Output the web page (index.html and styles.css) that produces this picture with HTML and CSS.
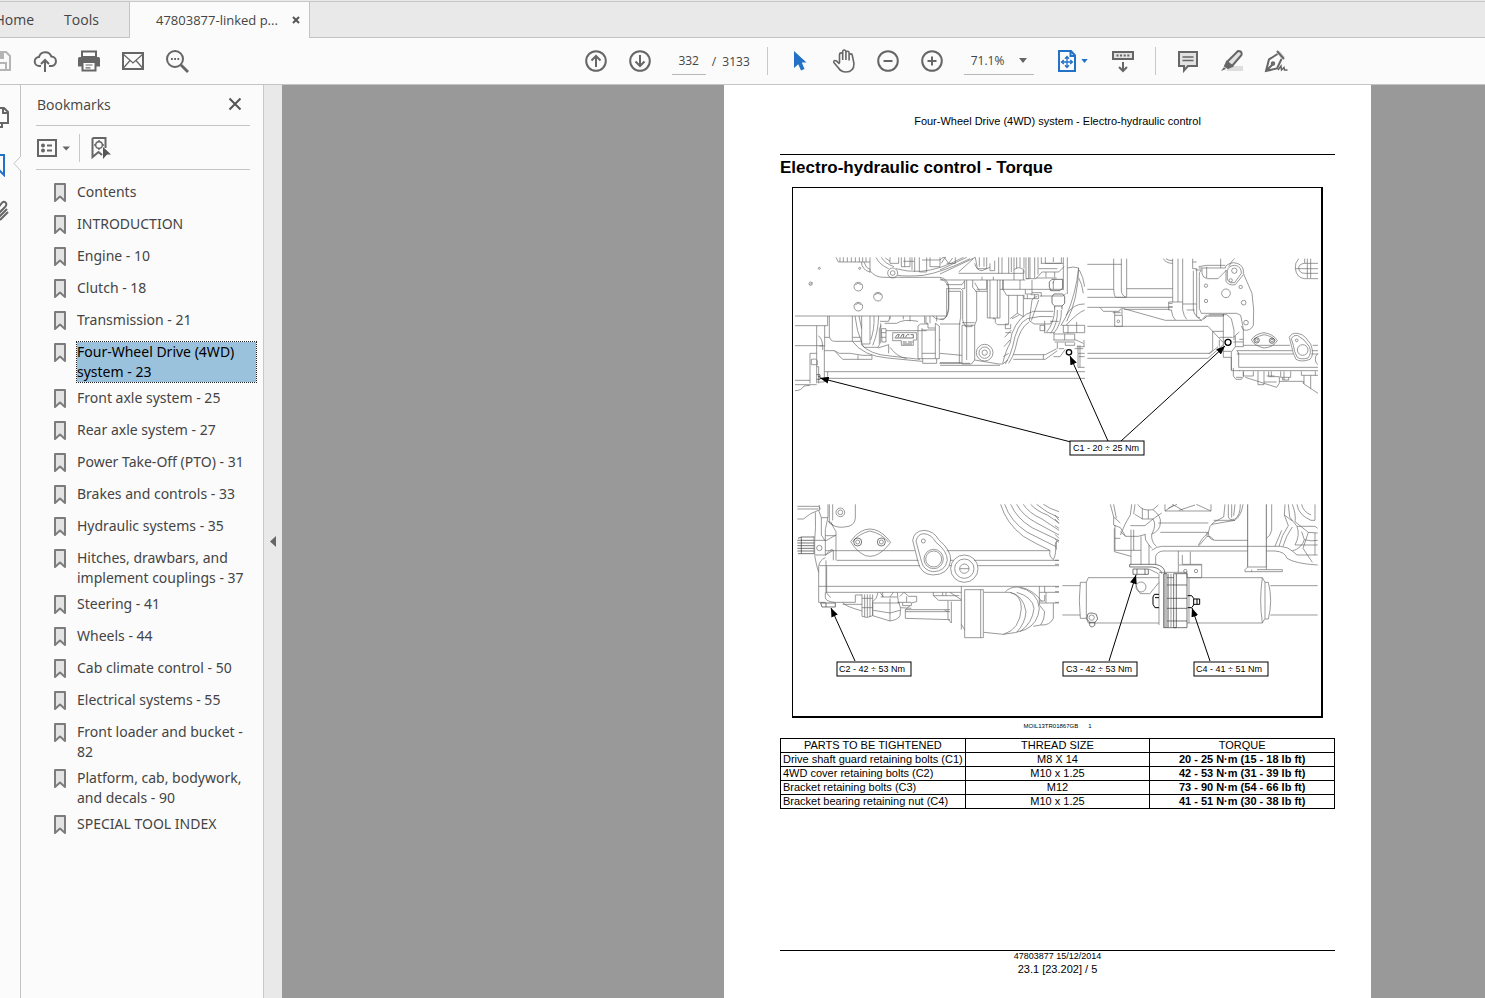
FILE: index.html
```html
<!DOCTYPE html>
<html lang="en">
<head>
<meta charset="utf-8">
<title>47803877-linked p...</title>
<link rel="stylesheet" href="styles.css">
</head>
<body>
<svg class="defs" aria-hidden="true">
  <defs>
    <symbol id="bm" viewBox="0 0 12 19"><path d="M1 1H11V18L6 13.500L1 18Z" fill="#e3e3e3" stroke="#7c7c7c" stroke-width="2" stroke-linejoin="round"/></symbol>
    <marker id="arrow" viewBox="0 0 10 8" refX="10" refY="4" markerWidth="9" markerHeight="7" markerUnits="userSpaceOnUse" orient="auto"><path d="M0 0L10 4L0 8Z" fill="#000"/></marker>
  </defs>
</svg>

<header class="tabs">
  <button class="tab tab-home">Home</button>
  <button class="tab tab-tools">Tools</button>
  <div class="tab tab-file"><span>47803877-linked p...</span>
    <button class="plain" aria-label="Close tab"><svg width="8" height="8" viewBox="0 0 8 8"><path d="M1 1L7 7M7 1L1 7" stroke="#555" stroke-width="2"/></svg></button>
  </div>
</header>

<div class="toolbar">
  <div class="group group-file">
    <button class="tool" aria-label="Save"><svg class="i faint" viewBox="0 0 24 24"><path d="M2 3H17L21 7V21H2Z M7 3V9H14V3 M6 21V14H17V21 M12 4V8"/></svg></button>
    <button class="tool" aria-label="Upload"><svg class="i" viewBox="0 0 24 24"><path d="M8 17H6.500a4.500 4.500 0 0 1-.5-9 6.500 6.500 0 0 1 12.300-.6A4.800 4.800 0 0 1 18 17H16 M12 23V11.500 M8 15L12 11L16 15"/></svg></button>
    <button class="tool" aria-label="Print"><svg class="i" viewBox="0 0 24 24"><path d="M5 2.500H19V8H5Z" fill="#fff"/><path d="M1 9.500Q1 8 2.500 8H21.500Q23 8 23 9.500V17.500H1Z" fill="#666" stroke="none"/><path d="M5.500 13H18.500V21.500H5.500Z" fill="#fff"/><path d="M8.500 16H15.500M8.500 18.800H13.500" stroke-width="1.200"/></svg></button>
    <button class="tool" aria-label="Mail"><svg class="i" viewBox="0 0 24 24"><path d="M2 4H22V20H2Z"/><path d="M2 5L12 14L22 5M2 19.500L9 11.500M22 19.500L15 11.500" stroke-width="1.300"/></svg></button>
    <button class="tool" aria-label="Search"><svg class="i" viewBox="0 0 24 24"><circle cx="10" cy="10" r="8"/><path d="M16 16L23 23" stroke-width="2.800"/><path d="M6 10h1.800M9.200 10H11M12.400 10h1.800" stroke-width="1.800"/></svg></button>
  </div>
  <div class="spacer-wide"></div>
  <div class="group">
    <button class="tool" aria-label="Previous page"><svg class="i" viewBox="0 0 24 24"><circle cx="12" cy="12" r="9.800"/><path d="M12 18V7M7.500 11.500L12 7L16.500 11.500"/></svg></button>
    <button class="tool" aria-label="Next page"><svg class="i" viewBox="0 0 24 24"><circle cx="12" cy="12" r="9.800"/><path d="M12 6V17M7.500 12.500L12 17L16.500 12.500"/></svg></button>
    <input class="page-no" aria-label="Page number" value="332">
    <span class="page-total">/ &nbsp;3133</span>
    <i class="sep"></i>
    <button class="tool" aria-label="Select"><svg class="i" viewBox="0 0 24 24"><path d="M6 2L18.500 13.500H13.800L16.500 20L13 21.500L10.300 15.200L6 19Z" fill="#2372c5" stroke="none"/></svg></button>
    <button class="tool" aria-label="Pan"><svg class="i" viewBox="0 0 24 24"><path class="thin" d="M7.500 14V5.500a1.600 1.600 0 0 1 3.200 0V11 M10.700 5V2.600a1.600 1.600 0 0 1 3.200 0V11 M13.900 3.800a1.600 1.600 0 0 1 3.200 0V11.500 M17.100 6.500a1.600 1.600 0 0 1 3.200 0L22 14.500Q22 23 14 23Q9 23 6.500 19L1.800 13.500Q1.500 10.500 4.500 12L7.500 15"/></svg></button>
    <button class="tool" aria-label="Zoom out"><svg class="i" viewBox="0 0 24 24"><circle cx="12" cy="12" r="9.800"/><path d="M7.500 12H16.500"/></svg></button>
    <button class="tool" aria-label="Zoom in"><svg class="i" viewBox="0 0 24 24"><circle cx="12" cy="12" r="9.800"/><path d="M7.500 12H16.500M12 7.500V16.500"/></svg></button>
    <label class="zoom"><select aria-label="Zoom level"><option>71.1%</option></select><svg width="8" height="5" viewBox="0 0 8 5"><path d="M0 0H8L4 5Z" fill="#666"/></svg></label>
    <button class="tool fit" aria-label="Fit page"><svg class="i blue" viewBox="0 0 24 24"><path d="M4 2H16L20 6.500V22H4Z M15.500 2V7H20"/><path d="M12 8V18M7 13H17M10 9.800L12 7.500L14 9.800M10 16.200L12 18.500L14 16.200M8.800 11L6.500 13L8.800 15M15.200 11L17.500 13L15.200 15" stroke-width="1.300"/></svg><svg width="7" height="4" viewBox="0 0 8 5"><path d="M0 0H8L4 5Z" fill="#2372c5"/></svg></button>
    <button class="tool" aria-label="Scrolling"><svg class="i" viewBox="0 0 24 24"><path d="M2 3H22V10H2Z" fill="#e2e2e2"/><path d="M5.500 6.500h2M9 6.500h2M12.700 6.500h2M16.300 6.500h2M12 13V22M8 18L12 22L16 18"/></svg></button>
    <i class="sep sep-tight"></i>
    <button class="tool" aria-label="Comment"><svg class="i" viewBox="0 0 24 24"><path d="M3 3H21V17H12L8 21.500V17H3Z" fill="#e2e2e2"/><path d="M6.500 8H17.500M6.500 11.500H17.500" stroke-width="1.300"/></svg></button>
    <button class="tool" aria-label="Highlight"><svg class="i" viewBox="0 0 24 24"><path d="M11 17H23V22H6Z" fill="#ddd" stroke="none"/><path d="M18 2Q22.500 2 21.500 6L12 17L7 13Z" fill="#e2e2e2"/><path d="M7 13L12 17L8 19L5 17Z" fill="#666"/><path d="M4 18L6 20L1 22Z" fill="#666" stroke="none"/></svg></button>
    <button class="tool" aria-label="Sign"><svg class="i" viewBox="0 0 24 24"><path d="M13 4L16 2L21 8L18 11Z" fill="#ddd" stroke="none"/><path d="M13 2L20 10M13.500 5L5 10.500L2 22L13 19.500L17.500 10M2 22L9 15"/><circle cx="9" cy="14.500" r="1.200"/><path d="M14 21L17 17L17.500 21L20 18.500L20.500 21H23.500" stroke-width="1.500"/></svg></button>
  </div>
  <div class="spacer"></div>
</div>

<main class="main">
  <nav class="rail" aria-label="Panels">
    <button class="plain" aria-label="Pages"><svg width="22" height="24" viewBox="0 0 22 24" class="i"><path d="M9 2H16L20 6V17H9Z M15 2V7H20 M9 7H3V21H14V17"/></svg></button>
    <button class="plain" aria-label="Bookmarks panel"><svg width="22" height="24" viewBox="0 0 22 24" class="i blue"><path d="M4 2H16V22L10 16L4 22Z"/></svg></button>
    <button class="plain" aria-label="Attachments"><svg width="22" height="24" viewBox="0 0 22 24" class="i"><path d="M19 9L10 18Q7 20 5 17Q4 15 6 13L13 4Q16 0 18 3Q19 5 17 7L10 14M20 12L12 20"/></svg></button>
    <svg class="notch" width="8" height="15" viewBox="0 0 8 15"><path d="M8 0L1 7.500L8 15" fill="#fbfbfb" stroke="#c4c4c4"/></svg>
  </nav>
  <aside class="panel">
    <div class="panel-head"><h2>Bookmarks</h2><button class="plain" aria-label="Close panel"><svg width="14" height="14" viewBox="0 0 14 14"><path d="M1.500 1.500L12.500 12.500M12.500 1.500L1.500 12.500" stroke="#555" stroke-width="2"/></svg></button></div>
    <div class="panel-tools">
      <button class="plain" aria-label="Options"><svg width="34" height="24" viewBox="0 0 34 24" class="i"><path d="M2 4H20V20H2Z"/><path d="M11 9.500H16M11 14.500H16"/><circle cx="7" cy="9.500" r="1" /><circle cx="7" cy="14.500" r="1"/><path d="M26.500 10.500H34L30.200 14.500Z" fill="#666" stroke="none"/></svg></button>
      <i class="sep-small"></i>
      <button class="plain" aria-label="Find bookmark"><svg width="22" height="24" viewBox="0 0 22 24" class="i"><path d="M2.500 2H15.500V12M2.500 2V21L8.500 16L12 19"/><circle cx="9" cy="9" r="3.300" stroke-width="1.400"/><path d="M9 4V6M9 12V14M4 9H6M12 9H14" stroke-width="1.400"/><path d="M13 11L21 18.500H17L13 23Z" fill="#555" stroke="none"/></svg></button>
    </div>
    <ul class="marks">
      <li><svg><use href="#bm"/></svg><a href="#">Contents</a></li>
      <li><svg><use href="#bm"/></svg><a href="#">INTRODUCTION</a></li>
      <li><svg><use href="#bm"/></svg><a href="#">Engine - 10</a></li>
      <li><svg><use href="#bm"/></svg><a href="#">Clutch - 18</a></li>
      <li><svg><use href="#bm"/></svg><a href="#">Transmission - 21</a></li>
      <li class="current"><svg><use href="#bm"/></svg><a href="#">Four-Wheel Drive (4WD) system - 23</a></li>
      <li><svg><use href="#bm"/></svg><a href="#">Front axle system - 25</a></li>
      <li><svg><use href="#bm"/></svg><a href="#">Rear axle system - 27</a></li>
      <li><svg><use href="#bm"/></svg><a href="#">Power Take-Off (PTO) - 31</a></li>
      <li><svg><use href="#bm"/></svg><a href="#">Brakes and controls - 33</a></li>
      <li><svg><use href="#bm"/></svg><a href="#">Hydraulic systems - 35</a></li>
      <li><svg><use href="#bm"/></svg><a href="#">Hitches, drawbars, and implement couplings - 37</a></li>
      <li><svg><use href="#bm"/></svg><a href="#">Steering - 41</a></li>
      <li><svg><use href="#bm"/></svg><a href="#">Wheels - 44</a></li>
      <li><svg><use href="#bm"/></svg><a href="#">Cab climate control - 50</a></li>
      <li><svg><use href="#bm"/></svg><a href="#">Electrical systems - 55</a></li>
      <li><svg><use href="#bm"/></svg><a href="#">Front loader and bucket - 82</a></li>
      <li><svg><use href="#bm"/></svg><a href="#">Platform, cab, bodywork, and decals - 90</a></li>
      <li><svg><use href="#bm"/></svg><a href="#">SPECIAL TOOL INDEX</a></li>
    </ul>
  </aside>
  <button class="collapse" aria-label="Collapse panel"><svg width="6" height="11" viewBox="0 0 6 11"><path d="M6 0V11L0 5.500Z" fill="#666"/></svg></button>

  <section class="viewer">
    <article class="sheet">
      <p class="running">Four-Wheel Drive (4WD) system - Electro-hydraulic control</p>
      <h1>Electro-hydraulic control - Torque</h1>
      <figure>
        <svg class="drawing" viewBox="793 188 528 528" role="img" aria-label="Torque points C1 to C4">
          <!-- upper left view: gearbox side -->
          <g class="ln" transform="translate(790 250) scale(.33333)">
            <path d="M138 22L145 36H240M150 22V36M160 22V36M172 22V36M184 22V36M196 22V36M208 22V36M218 22V36M228 22V36M214 36Q216 60 240 66M222 36Q226 54 242 60M240 22V68"/>
            <path d="M240 62Q255 82 280 82H450Q474 86 476 110V180Q472 208 452 208Q434 208 428 198"/>
            <path d="M258 22Q268 44 296 56M274 22Q284 40 312 50M318 56Q350 66 392 64Q450 60 520 22M322 76Q352 80 400 76Q460 66 540 26"/>
            <circle cx="308" cy="69" r="15"/><circle cx="308" cy="69" r="7"/>
            <path d="M300 22V40H326V22M334 22V50H360V22M344 22V50M366 22V60M374 22V66M388 22V66H410V22M396 30H450M420 22V50H450V22M340 34H372M300 34L286 24"/>
            <circle cx="88" cy="55" r="3"/><circle cx="209" cy="55" r="3"/><circle cx="62" cy="101" r="5"/><path d="M58 104L67 98"/>
            <circle cx="205" cy="110" r="13"/><circle cx="264" cy="140" r="13"/><circle cx="205" cy="170" r="13"/>
            <path d="M196 104Q204 96 214 104M196 164Q204 156 214 164M254 134Q264 126 274 134"/>
            <path d="M15 198H470M15 227H113V198M80 227V400M104 227V290M85 258Q96 262 98 288V300M88 288H98M118 198V258Q120 274 134 274H187V198M104 262H118"/>
            <path d="M195 198Q200 244 216 280M207 198Q210 214 215 236M215 198V282H240V198M266 198Q264 250 248 286M252 198Q254 238 242 270M216 282L222 292H264L268 284V236L274 226M188 274H216M188 262H212"/>
            <path d="M15 287H103V396H82M60 400V310H80M64 344V328Q78 324 82 332V344ZM15 391H60M15 404H80M15 422Q34 422 42 408L60 406"/>
            <path d="M80 350H86V400M103 302H133L158 328H246V316H218L180 310H148L133 302M204 316V328"/>
            <path d="M187 274Q220 318 292 324L396 334M212 282Q240 314 300 318L390 328M264 294L296 284M296 284V310M300 292Q320 320 350 326"/>
            <path d="M270 214H296L300 200M272 220V280M274 236H288V276H276ZM274 248H288M274 262H288M284 220H320Q340 206 384 214M288 242H410M300 198V208M340 198V208M360 198V214"/>
            <path d="M308 248H380V270H370V286H334V272H308Z"/>
            <path class="dk" d="M316 262L322 254H328L324 262M332 262L336 254H342L340 262M346 262L352 254H358M362 254H370V264H314M338 276H350M354 276H368M338 282H366"/>
            <path class="dk" d="M80 374H90V388H80M84 380H90"/>
            <path d="M384 228V326H398V340H440V326H448V228L436 220V234H414V220H408V200M384 228L392 222H414M396 234V326M436 234V326M398 326H440M404 198V220M420 198V220M440 214V198M396 310H436M396 240H436"/>
            <path d="M470 118V200M448 270H452M448 340H540M104 365H885M113 385H885M113 365V380"/>
          </g>
          <!-- upper middle view: axle joint -->
          <g class="ln" transform="translate(940 250) scale(.33333)">
            <path d="M0 60L80 22M0 72L106 22M0 30Q8 20 18 22M4 40L14 24L26 40L38 24M20 40H46V22M56 66L100 26M56 70H250M0 90H256M18 104H66L74 92M106 22L112 56H140V22M118 22V50M132 22V50M150 40V62H164V32M104 40Q110 62 126 62L150 52M176 22V70M186 22V70M206 22V70M222 22V60Q234 46 252 60V70M214 22V66M230 22V56M240 22V52M252 22V56M222 60V90M250 60V90M258 22V86H266V22M284 22V84M294 22V74M270 22V86M304 22V42M316 22V40H364V22M340 22V36M370 22V120M382 22V132M258 86H288L306 66H356L372 50M304 40H370M296 56H352M318 66V82M344 66V82M288 84H350"/>
            <path d="M0 86Q24 94 26 116V170Q24 196 12 208H0M18 116H62L68 122V210L74 226H66V342H94L104 330V226H74M26 124H62V200L58 226V340M74 92V116H66M80 90V330M98 90V112L110 126V210L104 226M106 124H142M110 118H140V90M104 98L118 122M142 90V204H180V90M150 90V204M172 90V204M158 206H166V218L172 224H206M126 90V80M160 90V80M188 90V120M104 330L176 342H188L204 330M0 222H62M66 218H104M76 224V230H96V224"/>
            <circle cx="134" cy="308" r="25"/><circle cx="134" cy="308" r="17"/><circle cx="134" cy="308" r="8"/>
            <path d="M0 310L66 316M0 338H66M0 346H180M180 118H370M190 90V120L200 136H250V200L232 190V136M206 136V222H196V236H212V222M210 206L232 190M216 206L236 196M240 90V118M256 118V132H276V90M252 134V146H296V134H272M262 134V146M284 134V146M300 138H370L378 130M276 150L268 212L282 222H330L338 212M296 150L274 212M276 150Q282 138 292 140M304 140V128H276"/>
            <path class="dk" d="M336 88H368V114L360 122H332L328 110V96Z"/><path d="M340 94V118M344 88L338 100"/>
            <path d="M188 340Q198 300 210 280L216 250Q236 196 280 184H340M196 342Q210 320 218 290Q230 220 262 206Q300 196 338 200M206 340Q220 320 226 296Q238 232 268 216M194 262L214 240M192 290L210 270M190 320L206 310M196 248H214"/>
            <path class="dk" d="M336 140L342 132H368L374 140V160L366 168H344L336 160ZM344 168V178M366 168V178"/>
            <path d="M344 178Q342 220 320 246M352 180Q354 220 332 250M364 180Q366 220 340 252M382 54Q400 48 416 54Q408 130 378 200L362 228M416 54Q414 150 380 214M418 60Q430 80 434 110M416 84Q426 100 430 130M434 162Q400 160 378 196M434 180Q410 190 378 226M300 226H314V242H300ZM314 212V250M316 248H344M330 214H356M366 226H434V248H370V226M384 226V250M410 216V248"/>
            <path d="M340 270H408L430 280M342 270V252H404V270M374 252V270M344 276H404M352 278V296M376 278V286H404V278M356 296H372M220 314H316L350 296M220 328H316L352 302M310 314V328M340 320H360L376 298M414 286V352M420 286V352M432 270V290M410 290H434M414 352H434M404 296H430M414 310H434M416 320H434"/>
            <circle class="bk" cx="387" cy="307" r="8"/>
          </g>
          <!-- upper right view: front axle -->
          <g class="ln" transform="translate(1080 250) scale(.33333)">
            <path d="M22 43H125M101 26V115Q102 140 108 142H138Q124 136 124 120V26M140 26V142M22 118H102M140 116H278M22 142H278M22 172H278M60 172L70 184H118L122 176M104 184V196H126V176M98 188H122M104 196V229H127V196"/>
            <circle cx="115" cy="214" r="4"/>
            <path d="M124 174L256 211H366M132 178H268M278 26V156H266V180H274Q276 200 286 210M266 160H278M266 170H278M294 26V156M308 26V180Q312 200 320 208M250 26Q258 40 278 40M258 26Q264 32 278 32M278 156H308M308 162H350M320 180H344M338 26V56H350V200L364 211L380 194M338 36H350M340 62V180Q344 200 360 204M346 60H364Q356 66 358 80V176L364 190H470L482 196L490 236V276H460"/>
            <path d="M356 54H436M356 50L380 46H436M366 54V70Q368 84 382 86H414L440 60M380 50V84M422 26V54M436 54Q436 42 460 38Q486 40 490 60V70L516 130Q524 180 520 226Q512 244 490 240L484 228M446 50Q456 30 464 26M438 60V94Q446 108 466 104L490 74M442 62V90Q450 102 464 98L484 70Q484 48 464 46Q446 46 442 62"/>
            <circle cx="463" cy="62" r="8"/><circle cx="452" cy="91" r="5"/><circle cx="378" cy="107" r="5"/><circle cx="482" cy="111" r="5"/><circle cx="438" cy="130" r="13"/><circle cx="378" cy="153" r="5"/><circle cx="491" cy="158" r="7"/><circle cx="498" cy="218" r="7"/>
            <path class="dk" d="M370 208L382 198H430V192"/><path d="M430 192V322H454M386 194H440L454 206L462 240V270M22 229H384L430 278M398 244V300L386 312M398 244H430M22 310H390L414 290M22 325H384L430 284M418 262H458M430 304H454M418 270V290"/>
            <circle class="bk" cx="444" cy="277" r="9"/>
            <path d="M454 322V362H480M460 262L478 246M466 258V290L454 306V360M490 276V290H466M478 268H490M514 270Q524 252 552 248Q580 252 592 272Q580 292 552 294Q524 288 514 270ZM520 270Q530 258 552 254Q576 258 586 272"/>
            <circle class="dk" cx="530" cy="271" r="8"/><circle class="dk" cx="576" cy="272" r="8"/><circle cx="530" cy="271" r="4"/><circle cx="576" cy="272" r="4"/>
            <path d="M628 262Q634 248 652 250Q668 252 676 262L692 282Q704 314 690 328Q664 338 648 328Q638 310 634 286ZM634 266Q640 254 652 256L672 270L688 290Q696 310 684 324Q664 330 652 322Q642 306 640 286Z"/><circle cx="668" cy="300" r="16"/><circle cx="650" cy="271" r="4"/>
            <path d="M490 286H630M470 302H636M476 308V352H714M470 302Q474 304 476 312M698 286H714M696 302H714M478 362H714M470 312H640M694 312H714M714 310Q704 318 706 330Q708 342 714 344"/>
            <path d="M460 354V378L468 388H484L490 380V364M468 382H486M490 364V378H520V364M496 382L590 412L598 400V380H566V364M534 364V404H552V364M552 396H590M560 378H584M574 364V380M602 364V382H632V364M608 382V390H626V382M612 390V364M598 394H670V402M664 364V376H714M672 376V402L714 430M692 376V416M706 364V376"/>
            <path d="M714 40H674Q656 42 656 54Q658 70 674 70H714M656 26Q644 38 646 56Q650 84 674 86H714M674 26V40M682 26V84M692 26V84M646 56H714"/>
          </g>
          <!-- lower left view: cover -->
          <g class="ln" transform="translate(790 495) scale(.33333)">
            <path d="M22 34H86Q92 36 90 44L62 56L40 72H22M22 42H84M76 52Q78 100 74 136M86 46L94 68H114M94 68V120M88 44V30M114 28V66L106 104V136M118 28V84Q136 100 164 96Q194 94 196 70V28M128 28V76M122 80Q130 98 138 110V196M106 122H138M94 120L106 138L138 120M114 78L130 90M74 182Q80 216 86 232M106 182Q122 160 128 164"/>
            <circle cx="151" cy="52" r="13"/><circle cx="151" cy="52" r="7"/>
            <path class="dk" d="M24 130L34 126H72M22 136H72M22 144H72M22 152H72M22 160H72M22 168H72M24 176H72M34 126V176"/><path d="M74 136V180H106V136ZM72 124V176"/><circle cx="88" cy="159" r="8"/>
            <path d="M182 140Q200 112 226 104Q240 100 254 104Q280 112 302 142Q280 172 254 182Q240 186 226 182Q200 170 182 140ZM188 140Q206 116 240 108Q276 116 296 142"/>
            <circle class="dk" cx="203" cy="141" r="12"/><circle cx="203" cy="141" r="6"/><circle class="dk" cx="274" cy="141" r="12"/><circle cx="274" cy="141" r="6"/>
            <path d="M368 136Q372 108 402 106Q432 108 446 134Q484 166 482 196Q476 240 428 240Q392 238 384 200ZM378 138Q384 116 402 116Q424 118 438 142Q472 168 472 196Q466 230 428 230Q400 226 394 198Z"/>
            <circle cx="400" cy="138" r="6"/><circle cx="431" cy="192" r="29"/><circle cx="431" cy="192" r="24"/>
            <circle class="fill" cx="523" cy="221" r="41"/><circle cx="523" cy="221" r="29"/><circle cx="523" cy="221" r="14"/><path d="M509 221H537"/>
            <path d="M106 167H374M470 167H780M140 196H386M480 196H490M552 196H807M88 212H390M478 212H484M564 212H807M86 274H807M108 292H514M748 292H807M86 322V214Q88 196 106 188M108 196V292L122 308M106 292V308Q108 320 134 322H196V300M86 322H106M106 180L130 166V196M110 214V292"/>
            <path class="dk" d="M92 324H136V336H96ZM108 324V336"/>
            <path d="M632 28Q648 84 700 124Q740 148 780 166Q776 184 790 194Q800 176 796 148Q796 138 807 136M644 28Q662 80 712 112L796 154M662 28Q680 70 726 98L806 136M680 28Q698 62 740 84L807 120M700 28Q716 54 756 72L807 106M722 28Q740 48 772 60L807 84M740 28Q770 54 807 68M760 28Q780 42 807 50"/>
            <path d="M158 322Q160 332 216 348M196 300H216M216 298V364Q230 372 248 362V298M224 298V366M232 298V366M240 298V366M216 310H248M216 338H248M158 328H216M264 292Q262 312 248 320V362L300 378Q320 376 330 364L332 340Q322 318 322 292M300 310V378M272 306H322M250 324H330M250 346L300 354L330 346M270 292L280 306M310 292L300 306M278 292V306"/>
            <path d="M322 322H364M330 304L342 292L356 304H380V320L364 324V332H338V322M350 304V322M332 338L364 340M346 344H480M346 350H480M346 370L480 374M360 332L346 344V370M430 292V302L446 316H514M430 302H508M458 292V302M468 302V292M474 318V372L484 384V320M474 350L464 346M480 292L514 314"/>
            <path d="M514 274V404M524 284H580V428H524ZM572 284V428M514 388L524 404M582 292H660Q694 300 694 340Q690 404 640 418L582 412M646 290Q660 276 682 276Q744 288 748 340Q744 386 706 404Q680 414 640 418M660 292Q700 300 708 350Q706 384 680 412M680 292Q728 306 732 340Q728 384 690 410M748 274V330L764 350Q764 374 752 390L730 394M690 276Q730 284 756 320M764 274V292M764 300V318H748M748 324H807M790 324V370Q780 392 752 390M768 292V324"/>
          </g>
          <!-- lower right view: shaft bracket -->
          <g class="ln" transform="translate(1055 495) scale(.33333)">
            <path d="M0 60L12 76M0 72L12 86M0 92L12 100M0 118L12 130M0 132L12 142M4 140V164M0 196H12M0 208H12M0 276H12M0 290H12M0 322H12"/>
            <path d="M166 28L176 66L196 84M176 28L184 70M176 66V90L196 98L212 124H250L272 118M230 28L226 60L212 84L196 120M240 28L236 58M248 28Q262 50 294 44L310 30M240 58L262 72H294L320 54M262 40V72M280 44V72M226 92H270L294 72M294 44Q320 64 316 84Q316 106 290 118M294 72Q306 90 290 118M310 84H460M316 112H460M270 118Q268 136 282 150L290 160M290 118Q288 140 304 154M180 90V166H228M178 100V170L228 184M228 104V208M236 104V166M258 124V208M282 150V208M212 124L196 110M228 166H258M180 130H196"/>
            <path d="M330 28V48H468V28M330 48L356 30M352 28L384 46M372 46L420 30M424 28L468 48M340 40L366 28M510 28L506 66L476 82Q462 92 460 112Q460 134 480 136H578M520 28V66Q524 78 540 72Q556 62 556 28M530 28V68M540 28L536 62M564 28Q560 60 540 76H476M460 112Q440 130 430 150M476 134Q464 120 456 124L430 154M456 124V112M540 76L470 88"/>
            <path class="dk" d="M578 28V216M634 28V216"/><path d="M578 216L570 224V230H682V224H606M578 216H634V224M590 230V224M650 28V106Q646 124 634 130M290 166Q306 154 320 154H676Q700 156 712 168L726 180H788M302 208V184Q306 170 324 168H578M634 168H660Q690 170 696 190Q720 206 788 210M672 154Q680 120 700 92L688 60L690 28M684 154Q694 120 712 96M700 28L704 66L726 94Q736 120 720 150M712 28Q724 60 720 80L760 112L788 114M726 28Q730 60 768 76H780V28M740 28Q744 50 768 60M712 168Q740 160 748 134L740 110M748 134Q768 140 788 136M760 112L744 160L772 202M780 114V180M726 94H780L788 100M688 60L712 78M660 154L680 106M720 150H788"/>
            <path class="dk" d="M224 208H300Q330 212 330 236V398M224 208V216H292Q318 220 320 236M234 222H280V238H234ZM246 222V238M270 222V238"/>
            <path d="M22 272H76M22 360H76M76 262H94V370H76Q70 316 76 262ZM94 262L100 248H312M94 370L100 384H312M312 236V390M282 222L310 236M286 294L312 262M240 262Q246 284 256 296H286M312 232H396V248H440V208H406V170M370 168V232M382 180V208H406M372 210H440"/>
            <circle cx="258" cy="276" r="15"/><circle cx="391" cy="228" r="5"/><circle cx="423" cy="228" r="5"/>
            <path class="dk" d="M326 236H336V398H326ZM356 236H364V398H356ZM364 236H396V398H364M336 248H356M336 270H396M336 310H396M336 340H396M336 378H396M336 398H364"/>
            <path d="M402 250V384M396 248H622L630 262V370L622 384H396M622 248Q612 316 622 384M630 262H640Q654 316 640 372H630M646 272H788M646 360H788M340 236V398M348 236V398"/>
            <path class="bk thin" d="M312 298H298L294 306V328L300 338H312M398 302H410L416 310V330L410 338H398M416 312H434V328H416M426 312V328M300 308H312"/>
            <path class="dk" d="M98 358Q106 350 124 358L128 372L120 382H104L96 372ZM104 382Q102 396 112 396Q122 394 120 382"/><circle cx="110" cy="368" r="8"/>
          </g>
          <g class="lead">
            <path d="M1071 442L820 378"/><path d="M1108 441L1070 356"/><path d="M1121 441L1225 346"/>
            <path d="M855 661L831 608"/><path d="M1109 661L1136 575"/><path d="M1210 661L1192 608"/>
          </g>
          <g class="tag">
            <rect x="1070" y="441" width="74" height="14"/><rect x="837" y="662" width="74" height="14"/><rect x="1063" y="662" width="74" height="14"/><rect x="1194" y="662" width="74" height="14"/>
            <text x="1073" y="451">C1 - 20 ÷ 25 Nm</text><text x="839" y="672">C2 - 42 ÷ 53 Nm</text><text x="1066" y="672">C3 - 42 ÷ 53 Nm</text><text x="1196" y="672">C4 - 41 ÷ 51 Nm</text>
          </g>
        </svg>
        <figcaption><span>MOIL13TR01867GB</span><span>1</span></figcaption>
      </figure>
      <table>
        <thead><tr><th>PARTS TO BE TIGHTENED</th><th>THREAD SIZE</th><th>TORQUE</th></tr></thead>
        <tbody>
          <tr><td>Drive shaft guard retaining bolts (C1)</td><td>M8 X 14</td><td>20 - 25 N·m (15 - 18 lb ft)</td></tr>
          <tr><td>4WD cover retaining bolts (C2)</td><td>M10 x 1.25</td><td>42 - 53 N·m (31 - 39 lb ft)</td></tr>
          <tr><td>Bracket retaining bolts (C3)</td><td>M12</td><td>73 - 90 N·m (54 - 66 lb ft)</td></tr>
          <tr><td>Bracket bearing retaining nut (C4)</td><td>M10 x 1.25</td><td>41 - 51 N·m (30 - 38 lb ft)</td></tr>
        </tbody>
      </table>
      <footer><small>47803877 15/12/2014</small><span>23.1 [23.202] / 5</span></footer>
    </article>
  </section>
</main>
</body>
</html>
```
FILE: styles.css
```css
* { box-sizing: border-box; }
body {
  margin: 0;
  height: 100vh;
  display: flex;
  flex-direction: column;
  overflow: hidden;
  background: #fbfbfb;
  color: #444;
  font-family: "Open Sans", "Noto Sans", sans-serif;
  font-size: 14px;
}
.defs { position: absolute; width: 0; height: 0; }
button { font: inherit; color: inherit; border: 0; background: none; padding: 0; }
.plain { display: flex; }

.tabs {
  flex: none;
  display: flex;
  height: 38px;
  padding-top: 1px;
  background: linear-gradient(#c8c8c8, #c8c8c8) 0 1px / 100% 1px no-repeat, #e9e9e9;
  border-bottom: 1px solid #c4c4c4;
}
.tab { display: flex; align-items: center; }
.tab-home { margin-left: -8px; width: 42px; justify-content: flex-end; }
.tab-tools { width: 95px; justify-content: center; }
.tab-file {
  width: 181px;
  height: 37px;
  margin-top: 1px;
  padding: 0 9px 2px 26px;
  justify-content: space-between;
  background: #fbfbfb;
  border: 1px solid #c4c4c4;
  border-width: 0 1px;
  font-size: 13px;
}

.toolbar {
  flex: none;
  display: flex;
  align-items: center;
  height: 47px;
  border-bottom: 1px solid #c4c4c4;
  background: #fbfbfb;
}
.group { display: flex; align-items: center; flex: none; }
.group-file { margin-left: -21px; }
.spacer-wide { flex: 2; }
.spacer { flex: 1; }
.tool { display: flex; align-items: center; justify-content: center; width: 44px; height: 44px; }
.i { fill: none; stroke: #666; stroke-width: 2; }
.tool .i { width: 24px; height: 24px; }
.i .thin { stroke-width: 1.600; }
.i.faint { stroke: #b5b5b5; }
.i.blue { stroke: #2372c5; }
.page-no, .zoom select { font: inherit; font-size: 12px; color: #444; background: none; border: 0; outline: 0; }
.page-no { width: 34px; height: 28px; margin-left: 10px; padding: 0; text-align: center; border-bottom: 1px solid #b8b8b8; }
.page-total { width: 61px; padding-left: 6px; font-size: 12px; white-space: nowrap; }
.sep { width: 1px; height: 28px; background: #c8c8c8; margin-right: 10px; }
.sep-tight { margin-left: 10px; }
.zoom { display: flex; align-items: center; width: 70px; height: 28px; margin: 0 21px 0 10px; padding-right: 7px; border-bottom: 1px solid #b8b8b8; }
.zoom select { appearance: none; flex: 1; width: 50px; padding: 0 0 0 7px; }
.fit { width: 33px; height: 44px; gap: 2px; margin-right: 13px; }

.main { flex: 1; min-height: 0; display: flex; }
.rail {
  flex: none;
  position: relative;
  width: 21px;
  padding-top: 21px;
  display: flex;
  flex-direction: column;
  align-items: flex-end;
  gap: 23px;
  border-right: 1px solid #c4c4c4;
}
.rail .plain { margin-right: 10px; }
.notch { position: absolute; right: -1px; top: 71px; }
.panel { flex: none; width: 243px; padding: 0 6px 0 15px; border-right: 1px solid #c8c8c8; }
.panel-head { display: flex; align-items: center; justify-content: space-between; height: 41px; margin-right: 7px; padding: 0 8px 2px 1px; border-bottom: 1px solid #c4c4c4; }
.panel-head h2 { margin: 0; font-size: 14px; font-weight: 400; }
.panel-tools { display: flex; align-items: center; height: 44px; margin-right: 7px; border-bottom: 1px solid #c4c4c4; }
.sep-small { width: 1px; height: 28px; margin: 0 10px 0 9px; background: #c8c8c8; }
.marks { list-style: none; margin: 0; padding: 9px 0 0 17px; font-family: "Noto Sans", "Open Sans", sans-serif; }
.marks li { display: flex; gap: 10px; min-height: 32px; padding: 3px 0; line-height: 20px; }
.marks svg { flex: none; width: 14px; height: 19px; margin-top: 1px; }
.marks a { color: #444; text-decoration: none; align-self: flex-start; margin-right: -2px; }
.marks .current a { flex: 1; margin-right: 1px; color: #000; background: #9bc2dc; outline: 1px dotted #222; }
.collapse { flex: none; width: 18px; display: flex; align-items: center; justify-content: center; background: #e9e9e9; }

.viewer {
  flex: 1;
  display: grid;
  grid-template-columns: 442fr 647fr 114fr;
  background: #999;
  overflow: hidden;
}
.sheet {
  grid-column: 2;
  display: flex;
  flex-direction: column;
  padding: 0 36px 22px 56px;
  background: #fff;
  color: #000;
  font-family: "Liberation Sans", Arial, sans-serif;
  font-size: 11px;
}
.running { margin: 0; height: 70px; padding-top: 30px; line-height: 13px; text-align: center; border-bottom: 1px solid #000; }
h1 { margin: 0; height: 32px; font-size: 17px; line-height: 26px; }
figure { margin: 0 12px; }
.drawing { display: block; width: 100%; border: 1px solid #000; border-width: 1px 2px 2px 1px; }
figcaption { display: flex; justify-content: center; gap: 10px; height: 20px; font-size: 6px; line-height: 16px; }
.ln { fill: none; stroke: #666; stroke-width: 2; }
.ln .dk { stroke: #333; }
.ln .bk { stroke: #000; stroke-width: 4; }
.ln .bk.thin { stroke-width: 3; }
.ln .fill { fill: #fff; }
.lead path { stroke: #000; stroke-width: 1; marker-end: url(#arrow); }
.tag rect { fill: #fff; stroke: #000; }
.tag text { font-size: 9px; }
table { width: 100%; table-layout: fixed; border-collapse: collapse; line-height: 13px; }
th, td { height: 14px; padding: 0 2px; border: 1px solid #000; text-align: center; font-weight: 400; white-space: nowrap; }
td:first-child { text-align: left; }
td:last-child { font-weight: 700; }
footer { display: flex; flex-direction: column; align-items: center; margin-top: auto; border-top: 1px solid #000; line-height: 14px; }
footer small { font-size: 9px; line-height: 11px; }
```
